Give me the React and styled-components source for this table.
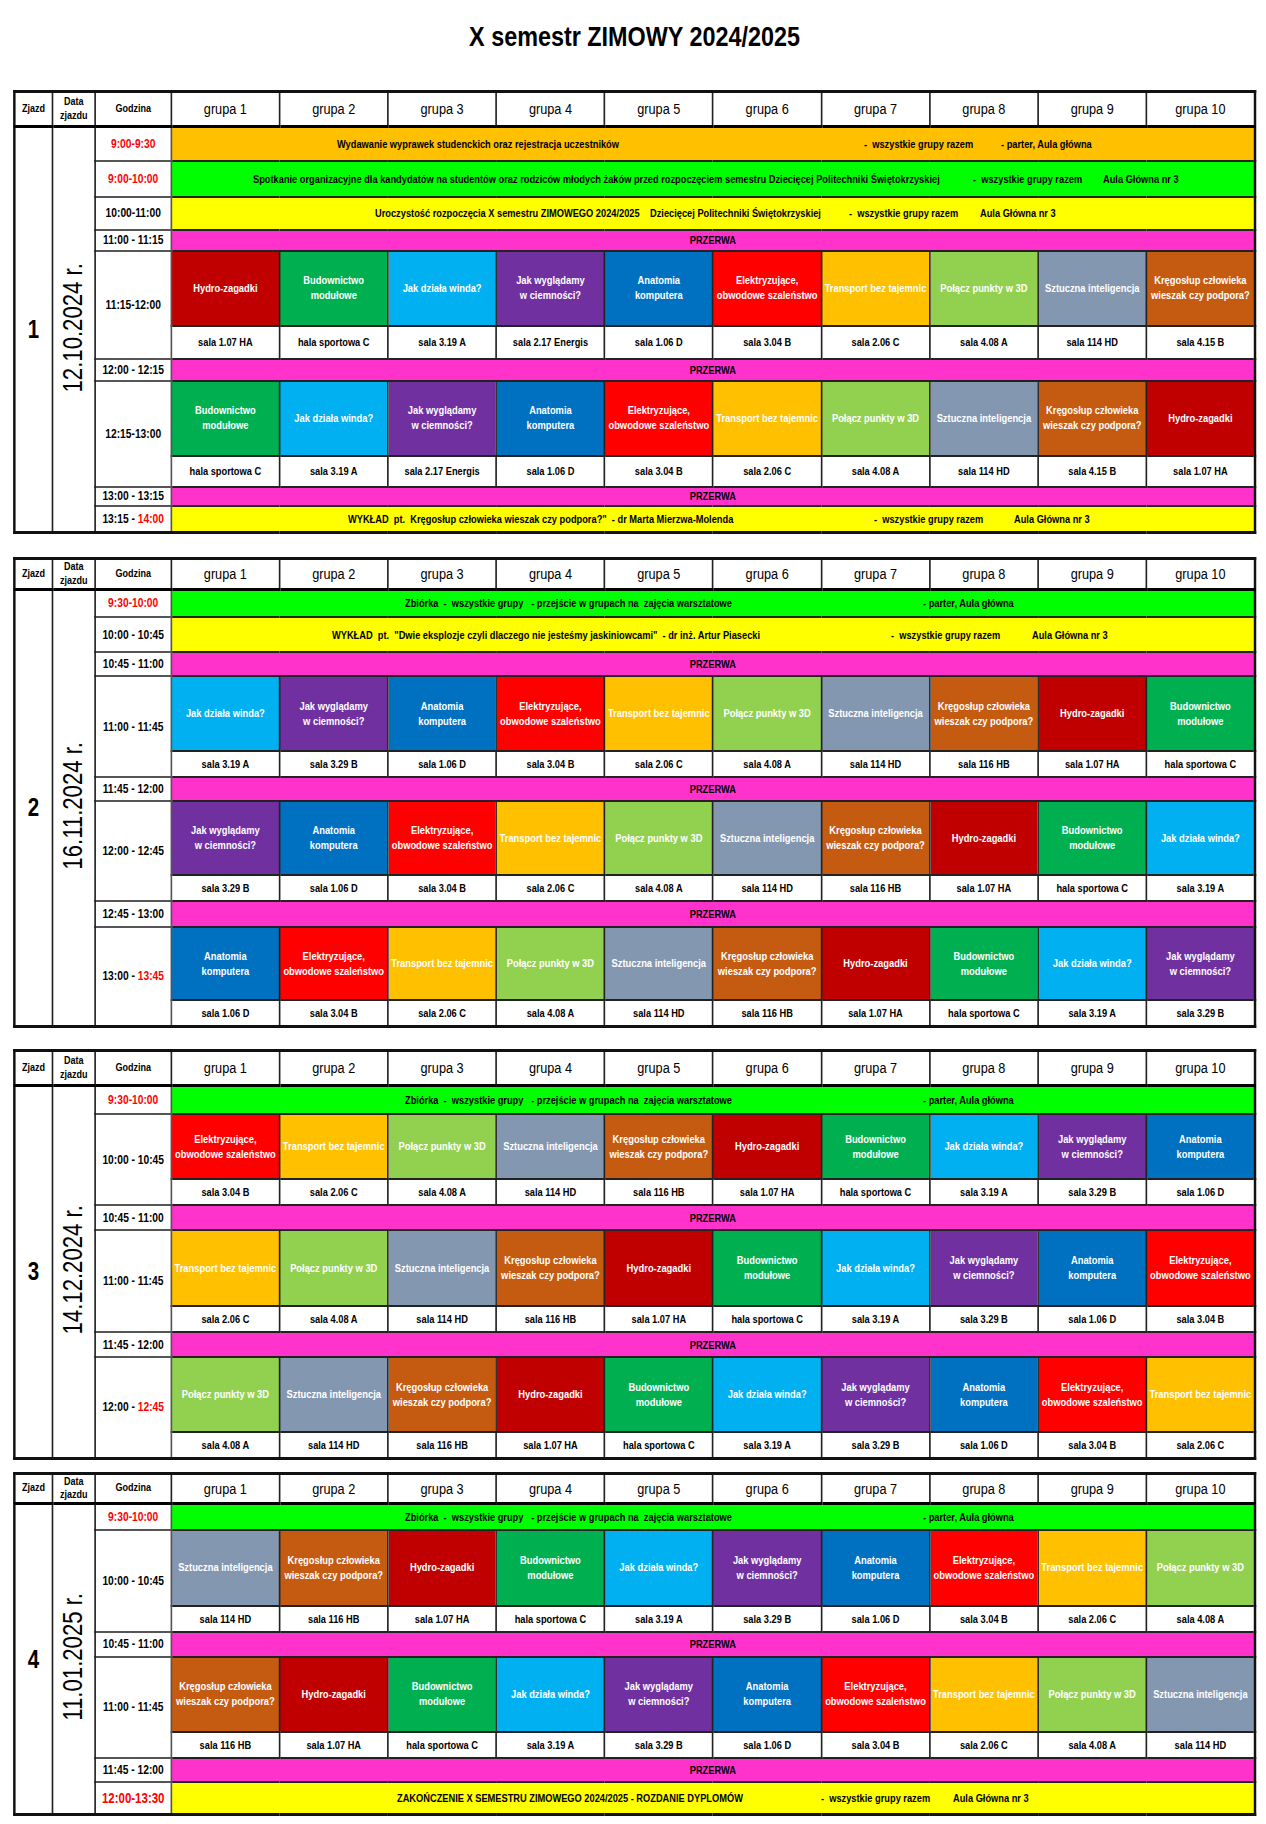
import React from 'react';
import styled, { createGlobalStyle } from 'styled-components';

// Arial Narrow is not installed: the sheet is laid out in Arial (Liberation Sans)
// widths and squeezed horizontally, which is what Arial Narrow is.
const K = 0.82;
const px = v => `${(v / K).toFixed(2)}px`;

const GlobalStyle = createGlobalStyle`
  body {
    margin: 0;
    background: #fff;
    color: #000;
    font-family: "Liberation Sans", Arial, sans-serif;
  }
`;

const ORANGE = '#FFC000';
const GREEN = '#00FF00';
const YELLOW = '#FFFF00';
const PINK = '#FF33CC';

const ACTS = [
  { lines: ['Hydro-zagadki'], bg: '#C00000', room: 'sala 1.07 HA' },
  { lines: ['Budownictwo', 'modułowe'], bg: '#00B050', room: 'hala sportowa C' },
  { lines: ['Jak działa winda?'], bg: '#00B0F0', room: 'sala 3.19 A' },
  { lines: ['Jak wyglądamy', 'w ciemności?'], bg: '#7030A0', room: 'sala 3.29 B' },
  { lines: ['Anatomia', 'komputera'], bg: '#0070C0', room: 'sala 1.06 D' },
  { lines: ['Elektryzujące,', 'obwodowe szaleństwo'], bg: '#FF0000', room: 'sala 3.04 B' },
  { lines: ['Transport bez tajemnic'], bg: '#FFC000', room: 'sala 2.06 C' },
  { lines: ['Połącz punkty w 3D'], bg: '#92D050', room: 'sala 4.08 A' },
  { lines: ['Sztuczna inteligencja'], bg: '#8497B0', room: 'sala 114 HD' },
  { lines: ['Kręgosłup człowieka', 'wieszak czy podpora?'], bg: '#C55A11', room: 'sala 116 HB' },
];

const ALL = '-  wszystkie grupy razem';
const AULA = 'Aula Główna nr 3';
const ZBIORKA = [
  [233, 'Zbiórka  -  wszystkie grupy   - przejście w grupach na  zajęcia warsztatowe'],
  [751, '- parter, Aula główna'],
];

const BLOCKS = [
  {
    no: '1',
    date: '12.10.2024 r.',
    space: 0,
    head: 35,
    rooms: { 3: 'sala 2.17 Energis', 9: 'sala 4.15 B' },
    rows: [
      {
        kind: 'banner', h: 34, bg: ORANGE, time: [['9:00-9:30', true]],
        parts: [
          [165, 'Wydawanie wyprawek studenckich oraz rejestracja uczestników'],
          [692, ALL],
          [829, '- parter, Aula główna'],
        ],
      },
      {
        kind: 'banner', h: 36, bg: GREEN, time: [['9:00-10:00', true]],
        parts: [
          [81, 'Spotkanie organizacyjne dla kandydatów na studentów oraz rodziców młodych żaków przed rozpoczęciem semestru Dziecięcej Politechniki Świętokrzyskiej'],
          [801, ALL],
          [931, AULA],
        ],
      },
      {
        kind: 'banner', h: 33, bg: YELLOW, time: [['10:00-11:00']],
        parts: [
          [203, 'Uroczystość rozpoczęcia X semestru ZIMOWEGO 2024/2025'],
          [478, 'Dziecięcej Politechniki Świętokrzyskiej'],
          [677, ALL],
          [808, AULA],
        ],
      },
      { kind: 'break', h: 21, time: [['11:00 - 11:15']] },
      { kind: 'acts', h: 75, rh: 33, start: 0, time: [['11:15-12:00']] },
      { kind: 'break', h: 22, time: [['12:00 - 12:15']] },
      { kind: 'acts', h: 75, rh: 31, start: 1, time: [['12:15-13:00']] },
      { kind: 'break', h: 19, time: [['13:00 - 13:15']] },
      {
        kind: 'banner', h: 27, bg: YELLOW, time: [['13:15 - '], ['14:00', true]],
        parts: [
          [176, 'WYKŁAD  pt.  Kręgosłup człowieka wieszak czy podpora?"  - dr Marta Mierzwa-Molenda'],
          [702, ALL],
          [842, AULA],
        ],
      },
    ],
  },
  {
    no: '2',
    date: '16.11.2024 r.',
    space: 23,
    head: 28,
    rows: [
      { kind: 'banner', h: 28, bg: GREEN, time: [['9:30-10:00', true]], parts: ZBIORKA },
      {
        kind: 'banner', h: 35, bg: YELLOW, time: [['10:00 - 10:45']],
        parts: [
          [160, 'WYKŁAD  pt.  "Dwie eksplozje czyli dlaczego nie jesteśmy jaskiniowcami"  - dr inż. Artur Piasecki'],
          [719, ALL],
          [860, AULA],
        ],
      },
      { kind: 'break', h: 24, time: [['10:45 - 11:00']] },
      { kind: 'acts', h: 75, rh: 26, start: 2, time: [['11:00 - 11:45']] },
      { kind: 'break', h: 24, time: [['11:45 - 12:00']] },
      { kind: 'acts', h: 74, rh: 26, start: 3, time: [['12:00 - 12:45']] },
      { kind: 'break', h: 26, time: [['12:45 - 13:00']] },
      { kind: 'acts', h: 73, rh: 26, start: 4, time: [['13:00 - '], ['13:45', true]] },
    ],
  },
  {
    no: '3',
    date: '14.12.2024 r.',
    space: 21,
    head: 35,
    rows: [
      { kind: 'banner', h: 29, bg: GREEN, time: [['9:30-10:00', true]], parts: ZBIORKA },
      { kind: 'acts', h: 65, rh: 26, start: 5, time: [['10:00 - 10:45']] },
      { kind: 'break', h: 25, time: [['10:45 - 11:00']] },
      { kind: 'acts', h: 76, rh: 26, start: 6, time: [['11:00 - 11:45']] },
      { kind: 'break', h: 25, time: [['11:45 - 12:00']] },
      { kind: 'acts', h: 75, rh: 26, start: 7, time: [['12:00 - '], ['12:45', true]] },
    ],
  },
  {
    no: '4',
    date: '11.01.2025 r.',
    space: 12,
    head: 30,
    rows: [
      { kind: 'banner', h: 26, bg: GREEN, time: [['9:30-10:00', true]], parts: ZBIORKA },
      { kind: 'acts', h: 76, rh: 26, start: 8, time: [['10:00 - 10:45']] },
      { kind: 'break', h: 25, time: [['10:45 - 11:00']] },
      { kind: 'acts', h: 75, rh: 26, start: 9, time: [['11:00 - 11:45']] },
      { kind: 'break', h: 24, time: [['11:45 - 12:00']] },
      {
        kind: 'banner', h: 33, bg: YELLOW, time: [['12:00-13:30', true]], big: true,
        parts: [
          [225, 'ZAKOŃCZENIE X SEMESTRU ZIMOWEGO 2024/2025 - ROZDANIE DYPLOMÓW'],
          [649, ALL],
          [781, AULA],
        ],
      },
    ],
  },
];

const Viewport = styled.div`
  width: 1266px;
  overflow: hidden;
`;

const Sheet = styled.div`
  width: ${px(1266)};
  box-sizing: border-box;
  padding: 20px ${px(10)} 12px ${px(13)};
  transform: scaleX(${K});
  transform-origin: 0 0;
`;

const Title = styled.h1`
  margin: 0 0 38px;
  height: 32px;
  line-height: 32px;
  text-align: center;
  font-size: 28.5px;
  font-weight: 700;
`;

const Grid = styled.table`
  width: ${px(1243)};
  margin-top: ${({ $space }) => $space}px;
  table-layout: fixed;
  border-collapse: collapse;
  border-style: solid;
  border-color: #111;
  border-width: 3px ${px(3)};
`;

const Col = styled.col`
  width: ${({ $w }) => px($w)};
`;

const Row = styled.tr`
  height: ${({ $h }) => $h}px;
`;

const Cell = styled.td`
  border-style: solid;
  border-color: #222;
  border-width: 2px ${px(2)};
  padding: 0;
  text-align: center;
  vertical-align: middle;
  white-space: nowrap;
  overflow: hidden;
`;

const HeadCell = styled(Cell).attrs({ as: 'th' })`
  font-size: 11px;
  font-weight: 700;
  line-height: 1.25;
  border-bottom-width: 3px;
  border-bottom-color: #000;
`;

const GroupHead = styled(HeadCell)`
  font-size: 15.5px;
  font-weight: 400;
`;

const NoCell = styled(Cell)`
  font-size: 25px;
  font-weight: 700;
`;

// Rotated date: stays narrow along its length, full height across it.
const DateText = styled.span`
  display: inline-block;
  writing-mode: vertical-rl;
  transform: rotate(180deg) scale(${1 / K}, ${K});
  font-size: 27px;
  font-weight: 400;
  line-height: 1;
`;

const TimeCell = styled(Cell)`
  font-size: ${({ $big }) => ($big ? 14 : 12.5)}px;
  font-weight: 700;
  border-color: #555;
`;

const Red = styled.span`
  color: ${({ $on }) => ($on ? '#FF0000' : '#000')};
`;

const Band = styled(Cell)`
  background: ${({ $bg }) => $bg};
  font-size: 11.3px;
  font-weight: 700;
`;

const Stops = styled.div`
  display: grid;
  grid-template-columns: ${({ $cols }) => $cols};
  align-items: center;
  white-space: pre;
  > span {
    min-width: 0;
    text-align: left;
  }
`;

const Act = styled(Cell)`
  background: ${({ $bg }) => $bg};
  color: #fff;
  font-size: 11.4px;
  font-weight: 700;
  line-height: 15px;
  padding: 0 1px;
`;

const Room = styled(Cell)`
  font-size: 11.3px;
  font-weight: 700;
`;

function Time({ parts }) {
  return parts.map(([t, red], i) => (
    <Red key={i} $on={red}>
      {t}
    </Red>
  ));
}

function BannerText({ parts }) {
  const stops = parts.map(p => p[0]);
  const cols = [px(stops[0])]
    .concat(stops.slice(1).map((s, i) => px(s - stops[i])))
    .concat('1fr')
    .join(' ');
  return (
    <Stops $cols={cols}>
      <span />
      {parts.map(([, text], i) => (
        <span key={i}>{text}</span>
      ))}
    </Stops>
  );
}

function Block({ block }) {
  const count = block.rows.reduce((n, r) => n + (r.kind === 'acts' ? 2 : 1), 0);
  const lead = (
    <>
      <NoCell rowSpan={count}>{block.no}</NoCell>
      <Cell rowSpan={count}>
        <DateText>{block.date}</DateText>
      </Cell>
    </>
  );
  const trs = [];
  block.rows.forEach((r, i) => {
    const first = i === 0 ? lead : null;
    if (r.kind === 'acts') {
      const order = ACTS.map((_, k) => (r.start + k) % ACTS.length);
      trs.push(
        <Row key={i + 'a'} $h={r.h}>
          {first}
          <TimeCell rowSpan={2}>
            <Time parts={r.time} />
          </TimeCell>
          {order.map(k => (
            <Act key={k} $bg={ACTS[k].bg}>
              {ACTS[k].lines.map((l, j) => (
                <div key={j}>{l}</div>
              ))}
            </Act>
          ))}
        </Row>
      );
      trs.push(
        <Row key={i + 'b'} $h={r.rh}>
          {order.map(k => (
            <Room key={k}>{(block.rooms && block.rooms[k]) || ACTS[k].room}</Room>
          ))}
        </Row>
      );
    } else {
      trs.push(
        <Row key={i} $h={r.h}>
          {first}
          <TimeCell $big={r.big}>
            <Time parts={r.time} />
          </TimeCell>
          {r.kind === 'break' ? (
            <Band colSpan={10} $bg={PINK}>
              PRZERWA
            </Band>
          ) : (
            <Band colSpan={10} $bg={r.bg}>
              <BannerText parts={r.parts} />
            </Band>
          )}
        </Row>
      );
    }
  });

  return (
    <Grid $space={block.space}>
      <colgroup>
        <Col $w={38} />
        <Col $w={43} />
        <Col $w={76} />
        {ACTS.map((_, k) => (
          <col key={k} />
        ))}
      </colgroup>
      <thead>
        <Row $h={block.head}>
          <HeadCell>Zjazd</HeadCell>
          <HeadCell>
            Data
            <br />
            zjazdu
          </HeadCell>
          <HeadCell>Godzina</HeadCell>
          {ACTS.map((_, k) => (
            <GroupHead key={k}>grupa {k + 1}</GroupHead>
          ))}
        </Row>
      </thead>
      <tbody>{trs}</tbody>
    </Grid>
  );
}

export default function App() {
  return (
    <Viewport>
      <GlobalStyle />
      <Sheet>
        <Title>X semestr ZIMOWY 2024/2025</Title>
        {BLOCKS.map(b => (
          <Block key={b.no} block={b} />
        ))}
      </Sheet>
    </Viewport>
  );
}
